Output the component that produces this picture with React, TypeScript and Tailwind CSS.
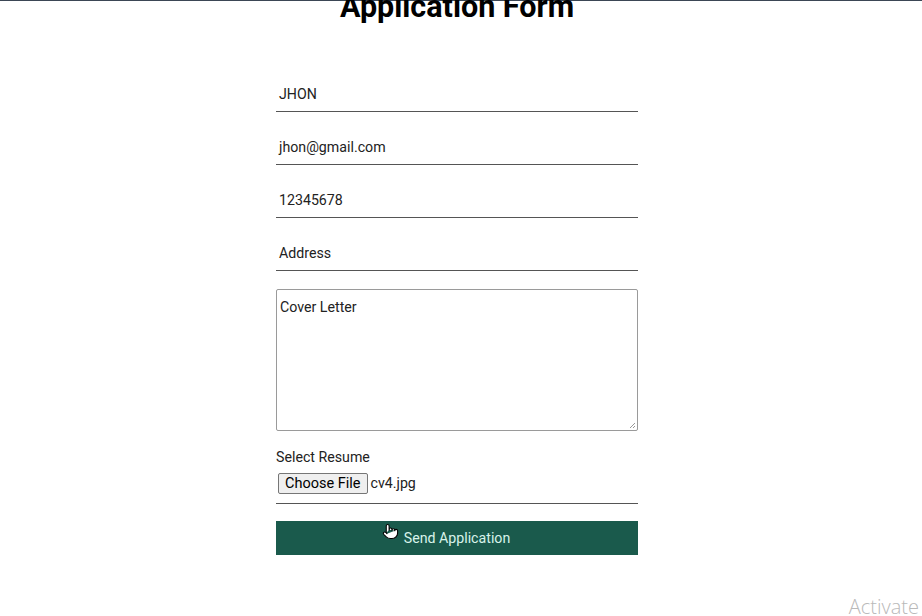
import { Pointer } from "lucide-react";

const fields = ["JHON", "jhon@gmail.com", "12345678", "Address"];

const App = () => {
  return (
    <div className="relative h-[616px] w-full overflow-hidden bg-white font-['Roboto',sans-serif] text-[14.2px] text-[#222]">
      <div className="h-px w-full bg-[#3b4655]" />
      <div className="pr-[8px]">
        <h1 className="mt-[-12px] text-center text-[30.5px] leading-[36px] font-bold text-black">
          Application Form
        </h1>

        <form className="mx-auto mt-[53px] flex w-[362px] flex-col">
          {fields.map((value, i) => (
            <div
              key={i}
              className={
                "flex h-[34px] items-center border-b border-[#555] px-[3px] " +
                (i > 0 ? "mt-[19px]" : "")
              }
            >
              {value}
            </div>
          ))}

          <div className="relative mt-[18px] h-[142px] rounded-[2px] border border-[#9a9a9a] px-[3px] pt-[8px] leading-[18px]">
            Cover Letter
            <svg
              className="absolute right-[1px] bottom-[1px]"
              width="7"
              height="7"
              viewBox="0 0 7 7"
            >
              <path d="M6 1L1 6M6 4L4 6" stroke="#999" strokeWidth="1" />
            </svg>
          </div>

          <label className="mt-[17px] leading-[18px]">Select Resume</label>
          <div className="mt-[7px] flex items-center gap-[3px] border-b border-[#555] pb-[9px] pl-[2px]">
            <span className="rounded-[2px] border border-[#767676] bg-[#efefef] px-[6px] text-[14.5px] leading-[19px] text-black">
              Choose File
            </span>
            <span>cv4.jpg</span>
          </div>

          <button
            type="button"
            className="relative mt-[17px] h-[34px] bg-[#1a5a4c] text-[14.2px] text-[#d8f3ea]"
          >
            Send Application
            <Pointer
              className="absolute top-[2px] left-[106px]"
              size={17}
              fill="white"
              color="black"
              strokeWidth={1.5}
            />
          </button>
        </form>
      </div>

      <div className="absolute right-[3px] bottom-[-6px] font-['Open_Sans',sans-serif] text-[20px] font-light text-[#b9b9b9]">
        Activate
      </div>
    </div>
  );
};

export default App;
